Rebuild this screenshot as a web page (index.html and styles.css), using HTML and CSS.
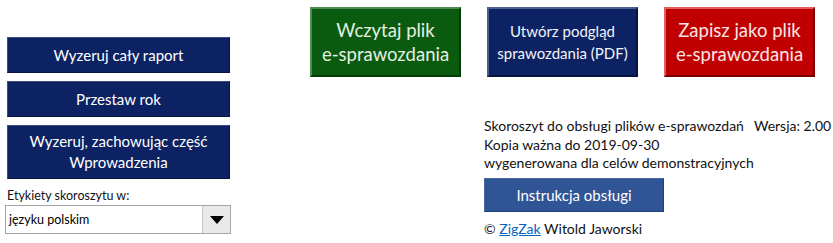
FILE: index.html
```html
<!DOCTYPE html>
<html lang="pl">
<head>
<meta charset="utf-8">
<link rel="stylesheet" href="styles.css">
</head>
<body>
<div class="page">
  <div class="left">
    <div class="btn navy h36">Wyzeruj cały raport</div>
    <div class="btn navy h36">Przestaw rok</div>
    <div class="btn navy h54">Wyzeruj, zachowując część<br>Wprowadzenia</div>
    <div class="label">Etykiety skoroszytu w:</div>
    <div class="select">
      <span class="select-text">języku polskim</span>
      <span class="select-arrow"><svg width="14" height="8" viewBox="0 0 14 8"><polygon points="0,0 14,0 7,8" fill="#000"/></svg></span>
    </div>
  </div>
  <div class="right">
    <div class="top-buttons">
      <div class="big green">Wczytaj plik<br>e-sprawozdania</div>
      <div class="big blue">Utwórz podgląd<br>sprawozdania (PDF)</div>
      <div class="big red">Zapisz jako plik<br>e-sprawozdania</div>
    </div>
    <div class="info">
      <div class="line first"><span>Skoroszyt do obsługi plików e-sprawozdań</span><span class="ver">Wersja: 2.00</span></div>
      <div class="line">Kopia ważna do 2019-09-30</div>
      <div class="line">wygenerowana dla celów demonstracyjnych</div>
      <div class="instr">Instrukcja obsługi</div>
      <div class="line copy">© <a class="link" href="#">ZigZak</a> Witold Jaworski</div>
    </div>
  </div>
</div>
</body>
</html>
```
FILE: styles.css
```css
html, body {
  margin: 0;
  padding: 0;
  background: #fff;
}
body {
  font-family: Lato, "Open Sans", sans-serif;
  width: 833px;
  height: 243px;
  overflow: hidden;
}
.page {
  display: flex;
}
.left {
  width: 223px;
  margin-left: 7px;
  padding-top: 37px;
  display: flex;
  flex-direction: column;
}
.btn {
  box-sizing: border-box;
  display: flex;
  align-items: center;
  justify-content: center;
  text-align: center;
  color: #fff;
  font-size: 15px;
  line-height: 21px;
}
.navy {
  background: #0c2262;
  border: 1px solid #3a4c80;
  border-right-color: #06163f;
  border-bottom-color: #06163f;
}
.h36 { height: 36px; margin-bottom: 8px; }
.h54 { height: 54px; }
.label {
  font-size: 12.5px;
  color: #111;
  margin-top: 9px;
  line-height: 16px;
}
.select {
  box-sizing: border-box;
  margin-top: 1px;
  margin-left: -2px;
  width: 226px;
  height: 29px;
  border: 1px solid #a6a6a6;
  display: flex;
  align-items: stretch;
}
.select-text {
  flex: 1;
  display: flex;
  align-items: center;
  padding-left: 3px;
  font-size: 12.5px;
  color: #000;
}
.select-arrow {
  width: 27px;
  background: #e9e9e9;
  border-left: 1px solid #c8c8c8;
  display: flex;
  align-items: center;
  justify-content: center;
}
.right {
  margin-left: 80px;
  padding-top: 7px;
  display: flex;
  flex-direction: column;
}
.top-buttons {
  display: flex;
  gap: 26px;
}
.big {
  box-sizing: border-box;
  width: 151px;
  height: 70px;
  display: flex;
  align-items: center;
  justify-content: center;
  text-align: center;
  font-size: 18.5px;
  line-height: 24px;
  border: 2px solid;
}
.green {
  background: #0a5a10;
  color: #e4f0e0;
  border-color: #4f8a52 #023d06 #023d06 #4f8a52;
}
.blue {
  background: #0c2262;
  color: #f2f4fa;
  font-size: 15px;
  line-height: 22px;
  border-color: #4d5e90 #051540 #051540 #4d5e90;
}
.red {
  background: #c00000;
  color: #fbe4e4;
  border-color: #e06060 #7a0000 #7a0000 #e06060;
}
.info {
  margin-left: 174px;
  margin-top: 40px;
  font-size: 14px;
  color: #111;
}
.line {
  line-height: 18.5px;
  white-space: nowrap;
}
.ver {
  margin-left: 10px;
}
.instr {
  box-sizing: border-box;
  width: 180px;
  height: 34px;
  margin-top: 5px;
  background: #2f5597;
  border: 1px solid #4a6aa6;
  border-right-color: #1f3e74;
  border-bottom-color: #1f3e74;
  color: #fff;
  font-size: 15px;
  display: flex;
  align-items: center;
  justify-content: center;
}
.copy {
  margin-top: 8px;
}
.link {
  color: #0563c1;
  text-decoration: underline;
}
```
